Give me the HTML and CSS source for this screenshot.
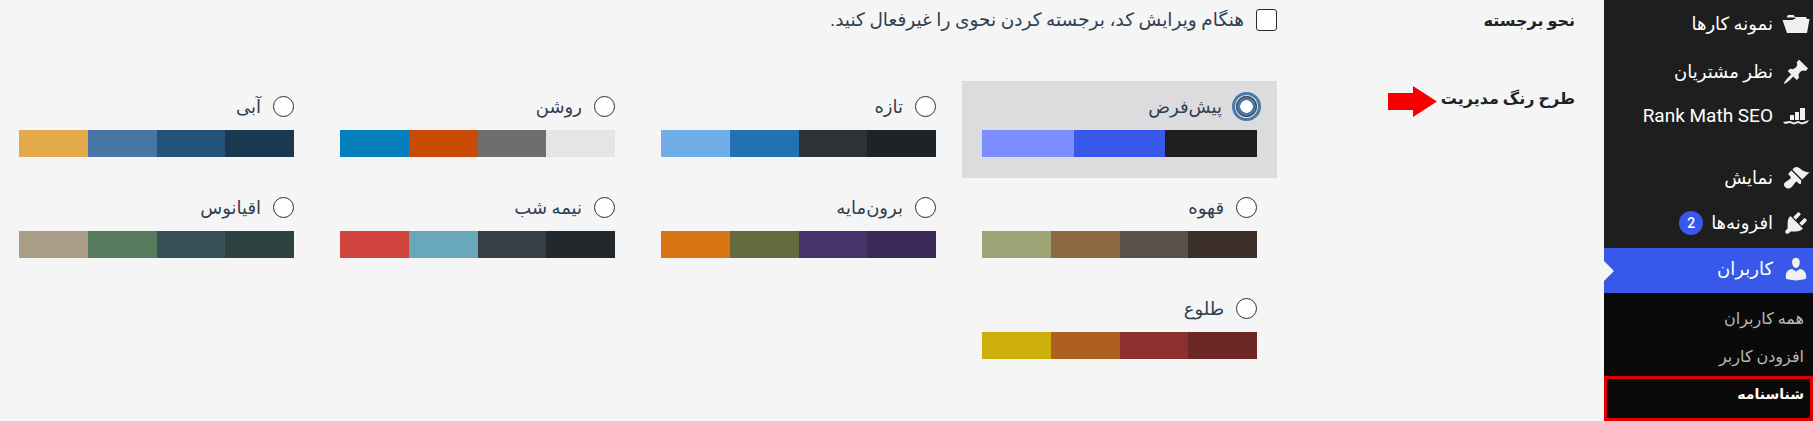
FILE: index.html
```html
<!DOCTYPE html>
<html lang="fa" dir="rtl">
<head>
<meta charset="utf-8">
<title>شناسنامه</title>
<link rel="stylesheet" href="styles.css">
</head>
<body>
<div class="page">
  <aside class="sidebar">
    <nav class="menu">
      <a class="item h48"><svg class="icon" viewBox="0 0 28 20"><path d="M6 1h5.500l1.500 2h11l1 2H14l-1.500-1.500H4.500zM.5 6h10l1.500-1h15.500l-2.500 14H5z"/></svg><span class="txt">نمونه کارها</span></a>
      <a class="item h48"><svg class="icon" viewBox="0 0 20 20"><path d="M10.44 3.02l1.82-1.82 6.36 6.35-1.83 1.82c-1.05-.68-2.48-.57-3.41.36l-.75.75c-.92.93-1.04 2.35-.35 3.41l-1.83 1.82-2.41-2.41-2.8 2.79c-.42.42-3.38 2.71-3.8 2.29s1.86-3.39 2.28-3.81l2.79-2.79L4.1 9.36l1.83-1.82c1.05.69 2.48.57 3.4-.36l.75-.75c.93-.92 1.05-2.35.36-3.41z"/></svg><span class="txt">نظر مشتریان</span></a>
      <a class="item h38"><svg class="icon" viewBox="0 0 28 20"><path d="M8 10h4v5H8zM13 7h4v8h-4zM18 3h5v12h-5zM1 17l7-1 4 1.500 4-1.500 4 1.500 7-2.500-2 3-5 1.500-4-1.500-4 1.500-4-1.500-5 1z"/></svg><span class="latin">Rank Math SEO</span></a>
      <a class="item h48 sep"><svg class="icon" viewBox="0 0 20 20"><path d="M14.48 11.06L7.41 3.99l1.5-1.5c.5-.56 2.3-.47 3.51.32 1.21.8 1.43 1.28 2.91 2.1 1.18.64 2.45 1.26 4.45.85zm-.71.71L6.7 4.7 4.93 6.47c-.39.39-.39 1.02 0 1.41l1.06 1.06c.39.39.39 1.03 0 1.42-.6.6-1.43 1.11-2.21 1.69-.35.26-.7.53-1.01.84C1.43 13.23.78 15.08 2.35 16.65c1.57 1.57 3.42.92 4.76-.42.31-.31.58-.66.84-1.01.58-.78 1.09-1.61 1.69-2.21.39-.39 1.03-.39 1.42 0l1.06 1.06c.39.39 1.02.39 1.41 0z"/></svg><span class="txt">نمایش</span></a>
      <a class="item h46"><svg class="icon" viewBox="0 0 20 20"><path d="M13.11 4.36L9.87 7.6 8 5.73l3.24-3.24c.35-.34 1.05-.2 1.56.32.52.51.66 1.21.31 1.55zm-8 1.77l.91-1.12 9.01 9.01-1.19.84c-.71.71-2.63 1.16-3.82 1.16H6.14L4.9 17.26c-.59.59-1.54.59-2.12 0-.59-.58-.59-1.53 0-2.12l1.24-1.24v-3.88c0-1.13.4-3.19 1.09-3.89zm7.26 3.97l3.24-3.24c.34-.35 1.04-.21 1.55.31.52.51.66 1.21.31 1.55l-3.24 3.25z"/></svg><span class="txt">افزونه‌ها</span><span class="badge latin">2</span></a>
      <a class="item active"><svg class="icon" viewBox="0 0 20 20"><path d="M10 9.25c-2.27 0-2.73-3.44-2.73-3.44C7 4.02 7.82 2 9.97 2c2.16 0 2.98 2.02 2.71 3.81 0 0-.41 3.44-2.68 3.44zm0 2.57L12.72 10c2.39 0 4.52 2.33 4.52 4.53v2.49s-3.65 1.13-7.24 1.13c-3.65 0-7.24-1.13-7.24-1.13v-2.49c0-2.25 1.94-4.48 4.47-4.48z"/></svg><span class="txt">کاربران</span></a>
      <div class="submenu">
        <a class="sub">همه کاربران</a>
        <a class="sub">افزودن کاربر</a>
        <a class="sub current">شناسنامه</a>
      </div>
    </nav>
  </aside>

  <main class="content">
    <div class="row first">
      <div class="th">نحو برجسته</div>
      <label class="td check"><input type="checkbox" class="checkbox"><span>هنگام ویرایش کد، برجسته کردن نحوی را غیرفعال کنید.</span></label>
    </div>
    <div class="row second">
      <div class="th th-arrow"><span>طرح رنگ مدیریت</span><svg class="arrow" viewBox="0 0 49 31"><path d="M0 7h25V0l24 15.500L25 31v-7H0z"/></svg></div>
      <div class="td picker">
        <label class="option selected"><span class="name"><input type="radio" name="c" class="radio" checked><span>پیش‌فرض</span></span><span class="bar"><i class="d1"></i><i class="d2"></i><i class="d3"></i></span></label>
        <label class="option"><span class="name"><input type="radio" name="c" class="radio"><span>تازه</span></span><span class="bar"><i class="f1"></i><i class="f2"></i><i class="f3"></i><i class="f4"></i></span></label>
        <label class="option"><span class="name"><input type="radio" name="c" class="radio"><span>روشن</span></span><span class="bar"><i class="l1"></i><i class="l2"></i><i class="l3"></i><i class="l4"></i></span></label>
        <label class="option"><span class="name"><input type="radio" name="c" class="radio"><span>آبی</span></span><span class="bar"><i class="b1"></i><i class="b2"></i><i class="b3"></i><i class="b4"></i></span></label>
        <label class="option"><span class="name"><input type="radio" name="c" class="radio"><span>قهوه</span></span><span class="bar"><i class="c1"></i><i class="c2"></i><i class="c3"></i><i class="c4"></i></span></label>
        <label class="option"><span class="name"><input type="radio" name="c" class="radio"><span>برون‌مایه</span></span><span class="bar"><i class="e1"></i><i class="e2"></i><i class="e3"></i><i class="e4"></i></span></label>
        <label class="option"><span class="name"><input type="radio" name="c" class="radio"><span>نیمه شب</span></span><span class="bar"><i class="m1"></i><i class="m2"></i><i class="m3"></i><i class="m4"></i></span></label>
        <label class="option"><span class="name"><input type="radio" name="c" class="radio"><span>اقیانوس</span></span><span class="bar"><i class="o1"></i><i class="o2"></i><i class="o3"></i><i class="o4"></i></span></label>
        <label class="option"><span class="name"><input type="radio" name="c" class="radio"><span>طلوع</span></span><span class="bar"><i class="s1"></i><i class="s2"></i><i class="s3"></i><i class="s4"></i></span></label>
      </div>
    </div>
  </main>
</div>
</body>
</html>
```
FILE: styles.css
```css
* { box-sizing: border-box; }
html, body { margin: 0; height: 421px; overflow: hidden; background: #f5f5f5; }
body { font-family: Roboto, "DejaVu Sans", sans-serif; font-size: 18px; color: #2f4053; }
.page { display: flex; height: 421px; width: 1813px; }

.sidebar { width: 209px; flex: none; background: #1e1e1e; color: #fff; }
.menu { display: flex; flex-direction: column; height: 100%; }
.item { display: flex; align-items: center; gap: 9px; padding-right: 3px; font-size: 18px; font-weight: 500; color: #fff; }
.txt { padding-bottom: 2px; }
.h48 { height: 48px; }
.h46 { height: 46px; padding-bottom: 4px; }
.h38 { height: 38px; }
.sep { margin-top: 20px; }
.icon { width: 28px; height: 28px; fill: #f0f0f0; flex: none; }
.latin { font-family: Roboto, sans-serif; font-size: 19px; font-weight: 400; }
.badge { width: 24px; height: 24px; border-radius: 50%; background: #3858e9; display: flex; align-items: center; justify-content: center; font-size: 14px; font-weight: 500; margin-right: -1px; }
.active { height: 45px; padding-bottom: 3px; background: #3858e9; position: relative; }
.active::before { content: ""; position: absolute; left: 0; top: 13px; border-style: solid; border-width: 10px 0 10px 10px; border-color: transparent transparent transparent #f5f5f5; }
.submenu { flex: 1; background: #0a0a0a; padding-top: 7px; display: flex; flex-direction: column; }
.sub { height: 38px; padding-right: 9px; padding-bottom: 1px; display: flex; align-items: center; font-size: 16px; color: #b8b8b8; }
.current { flex: 1; margin-top: 0; border: 3px solid #e00000; padding-right: 6px; padding-bottom: 9px; font-size: 14px; color: #fff; font-weight: 700; }

.content { flex: 1; min-width: 0; }
.row { display: flex; }
.first { height: 81px; padding-top: 9px; }
.th { width: 327px; flex: none; padding-right: 29px; font-size: 16px; font-weight: 700; color: #1d2327; }
.first .th { line-height: 24px; }
.th-arrow { display: flex; align-items: flex-start; gap: 4px; padding-top: 5px; line-height: 26px; }
.arrow { width: 49px; height: 31px; fill: #f60000; flex: none; }
.td { flex: none; }
.check { display: flex; align-items: center; gap: 12px; height: 22px; font-size: 18.500px; color: #2f4053; }
.checkbox { appearance: none; margin: 0; width: 21px; height: 22px; border: 1px solid #2b2b2b; border-radius: 3px; background: #fff; flex: none; }

.picker { display: grid; grid-template-columns: repeat(4, 315px); grid-auto-rows: 97px; gap: 4px 6px; width: 1278px; }
.option { display: flex; flex-direction: column; padding: 15px 20px 0; }
.selected { background: #dcdcde; }
.selected .name { gap: 14px; }
.name { display: flex; align-items: center; gap: 12px; height: 21px; margin-bottom: 13px; font-size: 18px; }
.radio { appearance: none; margin: 0; width: 21px; height: 21px; border: 1px solid #2b2b2b; border-radius: 50%; background: #fff; flex: none; }
.radio:checked { background: radial-gradient(circle, #fff 0 6px, #4a78a8 6.500px); box-shadow: 0 0 0 1px #dcdcde, 0 0 0 4px #4a78a8; }
.bar { display: flex; height: 27px; }
.bar i { flex: 1; }
.d1 { background: #1e1e1e; } .d2 { background: #3858e9; } .d3 { background: #7e8dff; }
.f1 { background: #1d2327; } .f2 { background: #2c3338; } .f3 { background: #2271b1; } .f4 { background: #72aee6; }
.l1 { background: #e5e5e5; } .l2 { background: #6e6e6e; } .l3 { background: #c74a05; } .l4 { background: #047fbd; }
.b1 { background: #1a3852; } .b2 { background: #25527a; } .b3 { background: #4576a4; } .b4 { background: #e3a94a; }
.c1 { background: #3b2e26; } .c2 { background: #59524c; } .c3 { background: #8f6844; } .c4 { background: #9ea476; }
.e1 { background: #3b2856; } .e2 { background: #49336b; } .e3 { background: #646a3b; } .e4 { background: #d77514; }
.m1 { background: #23282d; } .m2 { background: #363f44; } .m3 { background: #69a8bb; } .m4 { background: #d1443d; }
.o1 { background: #2c4140; } .o2 { background: #3a5058; } .o3 { background: #587a5c; } .o4 { background: #aa9d88; }
.s1 { background: #6d2724; } .s2 { background: #8c2f2f; } .s3 { background: #ad601f; } .s4 { background: #ccaf0b; }
```
